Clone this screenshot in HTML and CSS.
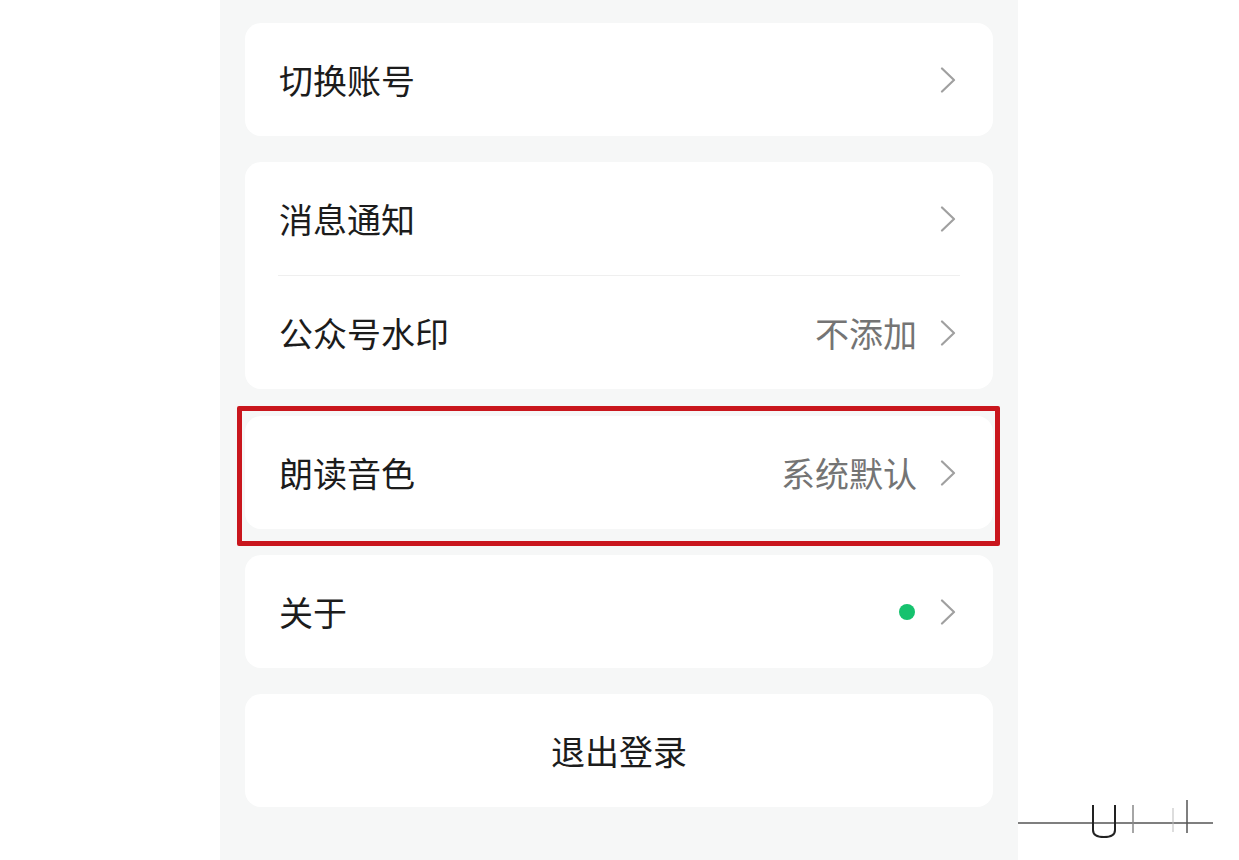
FILE: index.html
```html
<html>
<head>
<meta charset="utf-8">
<title>设置</title>
<link rel="stylesheet" href="styles.css">
</head>
<body>
<div class="page">
  <div class="phone">

    <div class="card">
      <div class="row">
        <span class="label">切换账号</span>
        <span class="right">
          <svg class="chev" viewBox="0 0 16 26"><polyline points="2,1.5 14,13 2,24.5"/></svg>
        </span>
      </div>
    </div>

    <div class="card">
      <div class="row">
        <span class="label">消息通知</span>
        <span class="right">
          <svg class="chev" viewBox="0 0 16 26"><polyline points="2,1.5 14,13 2,24.5"/></svg>
        </span>
      </div>
      <div class="divider"></div>
      <div class="row">
        <span class="label">公众号水印</span>
        <span class="right">
          <span class="value">不添加</span>
          <svg class="chev" viewBox="0 0 16 26"><polyline points="2,1.5 14,13 2,24.5"/></svg>
        </span>
      </div>
    </div>

    <div class="card marked">
      <div class="row">
        <span class="label">朗读音色</span>
        <span class="right">
          <span class="value">系统默认</span>
          <svg class="chev" viewBox="0 0 16 26"><polyline points="2,1.5 14,13 2,24.5"/></svg>
        </span>
      </div>
      <div class="redbox"></div>
    </div>

    <div class="card">
      <div class="row">
        <span class="label">关于</span>
        <span class="right">
          <span class="dot"></span>
          <svg class="chev" viewBox="0 0 16 26"><polyline points="2,1.5 14,13 2,24.5"/></svg>
        </span>
      </div>
    </div>

    <div class="card">
      <div class="row center">
        <span class="label">退出登录</span>
      </div>
    </div>

  </div>
</div>

<svg class="mark" viewBox="0 0 200 40" width="200" height="40">
  <line x1="0" y1="23" x2="195" y2="23" stroke="#555" stroke-width="1.5"/>
  <path d="M75 5 V30 Q75 37 86 37 Q97 37 97 30 V5" fill="none" stroke="#222" stroke-width="2"/>
  <line x1="115" y1="5" x2="115" y2="33" stroke="#888" stroke-width="1.5"/>
  <line x1="155" y1="8" x2="155" y2="32" stroke="#bbb" stroke-width="1"/>
  <line x1="169" y1="0" x2="169" y2="33" stroke="#555" stroke-width="1.5"/>
</svg>
</body>
</html>
```

FILE: styles.css
```css
body {
  margin: 0;
  background-color: #ffffff;
  font-family: "Noto Sans CJK SC", "Noto Sans", sans-serif;
}

.page {
  padding-left: 220px;
  height: 860px;
  overflow: hidden;
}

.phone {
  width: 798px;
  height: 860px;
  box-sizing: border-box;
  background-color: #f6f7f7;
  padding: 23px 25px 0 25px;
  display: flex;
  flex-direction: column;
  gap: 26px;
}

.card {
  background-color: #ffffff;
  border-radius: 16px;
}

.card.marked {
  position: relative;
  margin-top: 1px;
}

.row {
  height: 113px;
  display: flex;
  align-items: center;
  justify-content: space-between;
  padding: 0 37px 0 34px;
}

.row.center {
  justify-content: center;
  padding: 0;
}

.label {
  font-size: 34px;
  color: #1c1c1c;
  letter-spacing: 0px;
}

.right {
  display: flex;
  align-items: center;
  gap: 23px;
}

.value {
  font-size: 34px;
  color: #747474;
}

.chev {
  width: 16px;
  height: 26px;
}

.chev polyline {
  fill: none;
  stroke: #a0a0a0;
  stroke-width: 2.2;
  stroke-linecap: round;
  stroke-linejoin: round;
}

.dot {
  width: 16px;
  height: 16px;
  border-radius: 50%;
  background-color: #16c26e;
  margin-right: 2px;
}

.divider {
  height: 1px;
  background-color: #efefef;
  margin: 0 33px 0 33px;
}

.redbox {
  position: absolute;
  top: -10px;
  bottom: -17px;
  left: -8px;
  right: -7px;
  border: 5px solid #c9161d;
  border-radius: 2px;
}

.mark {
  position: absolute;
  left: 1018px;
  top: 800px;
}
```
